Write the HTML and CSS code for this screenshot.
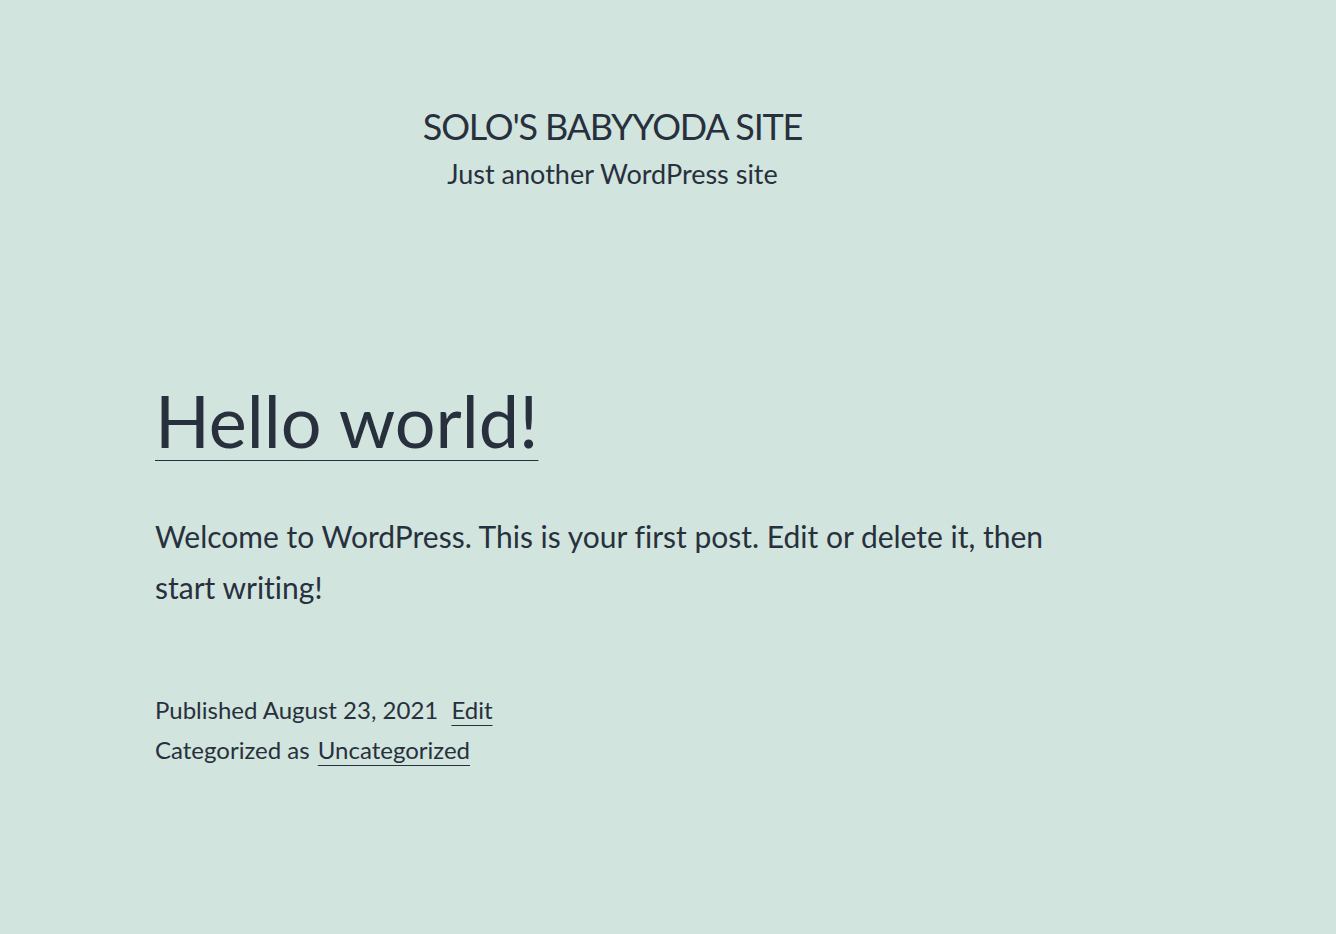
FILE: index.html
```html
<!DOCTYPE html>
<html lang="en">
<head>
  <meta charset="UTF-8">
  <meta name="viewport" content="width=device-width, initial-scale=1.0">
  <title>Solo's BabyYoda Site</title>
  <link rel="stylesheet" href="styles.css">
</head>
<body>

<div class="site">
  <!-- Cabecera del sitio -->
  <header class="site-header">
    <p class="site-title">Solo's BabyYoda Site</p>
    <p class="site-description">Just another WordPress site</p>
  </header>

  <!-- Entrada -->
  <article class="post">
    <h2 class="entry-title"><a href="#">Hello world!</a></h2>

    <div class="entry-content">
      <p>Welcome to WordPress. This is your first post. Edit or delete it, then start writing!</p>
    </div>

    <footer class="entry-footer">
      <div class="posted-on">Published August 23, 2021 <a class="edit-link" href="#">Edit</a></div>
      <div class="cat-links">Categorized as <a href="#">Uncategorized</a></div>
    </footer>
  </article>
</div>

</body>
</html>
```
FILE: styles.css
```css
body {
  margin: 0;
  background-color: #d1e4dd; /* Color de fondo */
  color: #28303d;
  font-family: Lato, "Open Sans", sans-serif;
  font-variant-ligatures: no-common-ligatures;
}

a {
  color: #28303d;
  text-decoration: underline;
  text-decoration-thickness: 1px;
}

.site {
  width: 915px;
  margin-left: 155px;
}

/* Cabecera */
.site-header {
  padding-top: 103px;
  text-align: center;
}

.site-title {
  margin: 0;
  font-size: 36px;
  line-height: 46.8px;
  letter-spacing: -1.2px;
  text-transform: uppercase;
}

.site-description {
  margin: 5px 0 0;
  font-size: 27px;
  line-height: 37.8px;
}

/* Entrada */
.post {
  margin-top: 181px;
}

.entry-title {
  margin: 0;
  font-size: 72px;
  font-weight: normal;
  line-height: 93.6px;
}

.entry-title a {
  text-underline-offset: 12px;
}

.entry-content p {
  margin: 44px 0 0;
  font-size: 30px;
  line-height: 51px;
}

.entry-footer {
  margin-top: 77px;
  font-size: 24px;
  line-height: 40px;
}

.entry-footer a {
  text-underline-offset: 6px;
}

.edit-link {
  margin-left: 7px;
}

.cat-links a {
  margin-left: 2px;
}
```
